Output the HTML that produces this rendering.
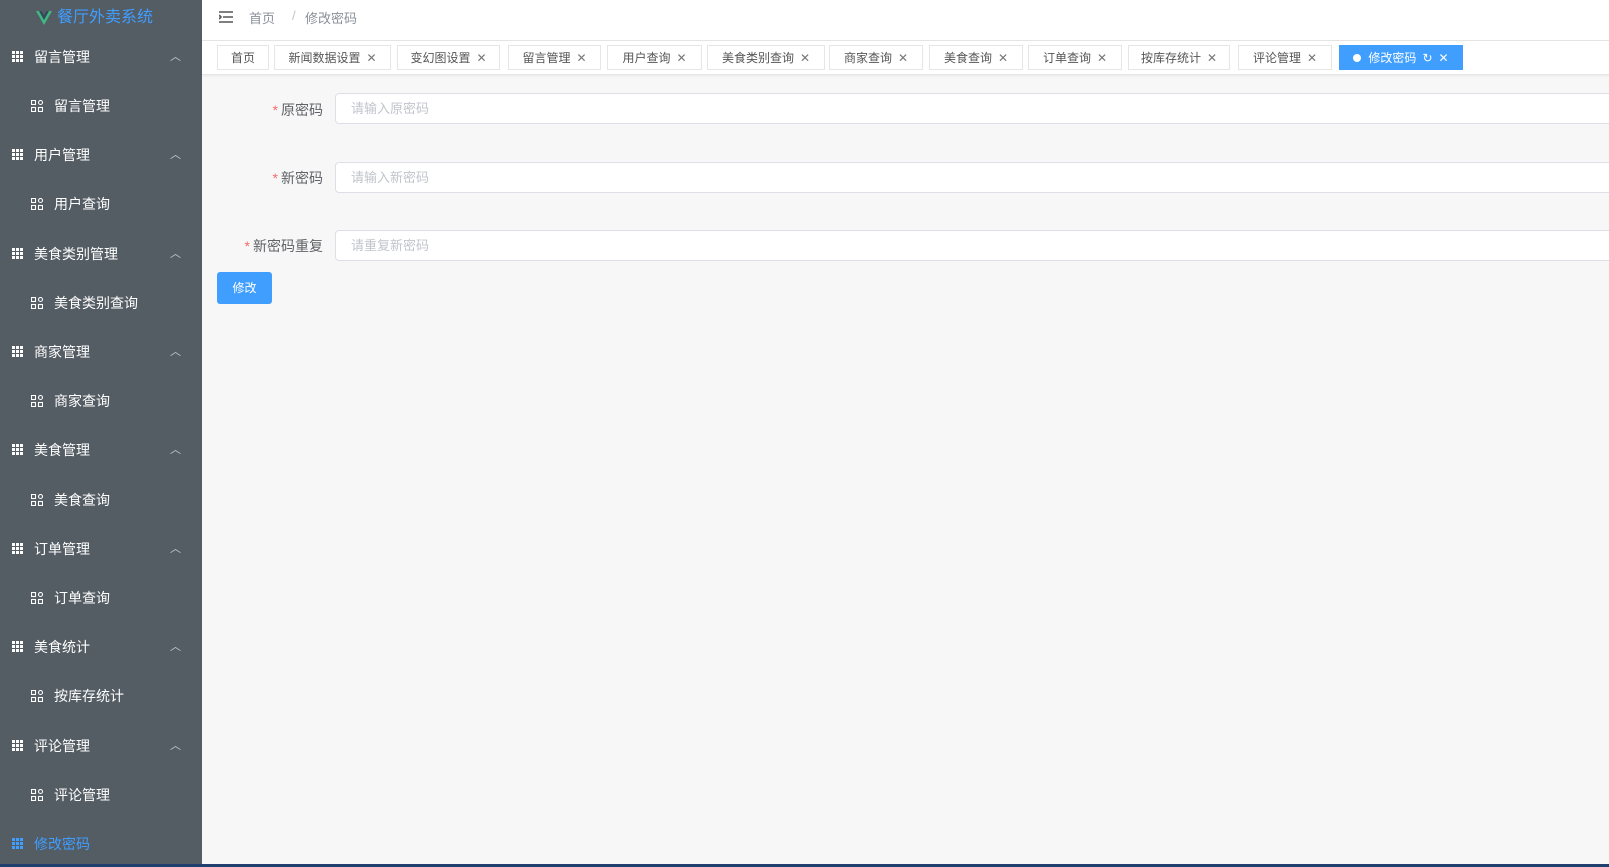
<!DOCTYPE html>
<html><head><meta charset="utf-8"><style>
*{margin:0;padding:0;box-sizing:border-box}
body{width:1609px;height:867px;overflow:hidden;background:#f7f7f7;font-family:"Liberation Sans","Noto Sans CJK SC",sans-serif;position:relative}
.side{position:absolute;left:0;top:0;width:202px;height:867px;background:#545c64}
.bot{position:absolute;left:0;top:864px;width:1609px;height:3px;background:#1f3f6e}
.logo{position:absolute;left:36px;top:7px;font-size:16px;color:#409eff;line-height:22px}
.logo svg{vertical-align:-3px;margin-right:5px}
.mi{position:absolute;left:0;width:202px;height:20px;line-height:20px;font-size:14px;color:#fff}
.mi .t{position:absolute;left:34px}
.mi.sub .t{left:54px}
.gi{position:absolute;left:12px;top:4px;width:11px;height:11px}
.si{position:absolute;left:31px;top:4px;width:12px;height:12px}
.ar{position:absolute;left:170px;top:0px;font-size:11px;color:#ccc}
.hdr{position:absolute;left:202px;top:0;right:0;height:41px;background:#fff;border-bottom:1px solid #e6e6e6}
.bc{position:absolute;top:8px;font-size:13px;color:#8a8f99}
.tabs{position:absolute;left:202px;top:41px;right:0;height:34px;background:#fff;border-bottom:1px solid #e6e6e6;box-shadow:0 1px 3px rgba(0,0,0,.06)}
.tab{position:absolute;top:4px;height:25px;border:1px solid #e6e6e6;background:#fff;font-size:12px;color:#555;line-height:24px;text-align:center}
.tab .x{color:#777;margin-left:6px;font-size:12px}
.tab.on{background:#409eff;border-color:#409eff;color:#fff}
.tab.on .x{color:#fff}
.lab{position:absolute;width:120px;left:203px;text-align:right;font-size:14px;color:#606266;line-height:20px}
.lab b{color:#f56c6c;font-weight:normal;margin-right:3px}
.inp{position:absolute;left:335px;right:-5px;height:31px;background:#fff;border:1px solid #dcdfe6;border-radius:4px;font-size:13px;color:#c0c4cc;line-height:29px;padding-left:15px}
.btn{position:absolute;left:217px;top:272px;width:55px;height:32px;background:#409eff;border-radius:3px;color:#fff;font-size:12px;line-height:32px;text-align:center}
</style></head><body>
<div class="side">
<div class="logo"><svg width="16" height="14" viewBox="0 0 16 14"><path d="M0 0h3l5 9 5-9h3L8 14z" fill="#41b883"/><path d="M3 0h2.5L8 4.5 10.5 0H13L8 9z" fill="#35495e"/></svg>餐厅外卖系统</div>
</div>
<div class="hdr">
<svg style="position:absolute;left:17px;top:11px" width="14" height="12" viewBox="0 0 14 12"><path d="M0 1h14M4 6h10M0 11h14M0 4l2 2-2 2" stroke="#555" stroke-width="1.6" fill="none"/></svg>
<span class="bc" style="left:47px">首页</span><span class="bc" style="left:90px;color:#c0c4cc">/</span><span class="bc" style="left:103px">修改密码</span>
</div>
<div class="tabs"></div>
<div id="m"></div>
<div class="lab" style="top:100px"><b>*</b>原密码</div>
<div class="inp" style="top:93px">请输入原密码</div>
<div class="lab" style="top:168px"><b>*</b>新密码</div>
<div class="inp" style="top:162px">请输入新密码</div>
<div class="lab" style="top:236px"><b>*</b>新密码重复</div>
<div class="inp" style="top:230px">请重复新密码</div>
<div class="btn">修改</div>
<div class="bot"></div>

<div class="tab" style="left:217px;width:52px;top:45px">首页</div>
<div class="tab" style="left:274px;width:117px;top:45px">新闻数据设置<span class="x">✕</span></div>
<div class="tab" style="left:397px;width:103px;top:45px">变幻图设置<span class="x">✕</span></div>
<div class="tab" style="left:508px;width:93px;top:45px">留言管理<span class="x">✕</span></div>
<div class="tab" style="left:607px;width:95px;top:45px">用户查询<span class="x">✕</span></div>
<div class="tab" style="left:707px;width:118px;top:45px">美食类别查询<span class="x">✕</span></div>
<div class="tab" style="left:829px;width:94px;top:45px">商家查询<span class="x">✕</span></div>
<div class="tab" style="left:929px;width:94px;top:45px">美食查询<span class="x">✕</span></div>
<div class="tab" style="left:1028px;width:94px;top:45px">订单查询<span class="x">✕</span></div>
<div class="tab" style="left:1128px;width:102px;top:45px">按库存统计<span class="x">✕</span></div>
<div class="tab" style="left:1238px;width:94px;top:45px">评论管理<span class="x">✕</span></div>
<div class="tab on" style="left:1339px;width:124px;top:45px"><span style="display:inline-block;width:8px;height:8px;border-radius:50%;background:#fff;margin-right:7px"></span>修改密码<span class="x" style="margin-left:6px">↻</span><span class="x">✕</span></div>

<script>
var g=[["留言管理","留言管理"],["用户管理","用户查询"],["美食类别管理","美食类别查询"],["商家管理","商家查询"],["美食管理","美食查询"],["订单管理","订单查询"],["美食统计","按库存统计"],["评论管理","评论管理"]];
var h="",gi='<svg class="gi" viewBox="0 0 11 11" fill="#fff"><rect x="0" y="0" width="3" height="3"/><rect x="4" y="0" width="3" height="3"/><rect x="8" y="0" width="3" height="3"/><rect x="0" y="4" width="3" height="3"/><rect x="4" y="4" width="3" height="3"/><rect x="8" y="4" width="3" height="3"/><rect x="0" y="8" width="3" height="3"/><rect x="4" y="8" width="3" height="3"/><rect x="8" y="8" width="3" height="3"/></svg>';
var si='<svg class="si" viewBox="0 0 12 12" fill="none" stroke="#fff" stroke-width="1.1"><rect x="0.5" y="0.5" width="4" height="4"/><rect x="7.5" y="0.5" width="4" height="4" rx="2"/><rect x="0.5" y="7.5" width="4" height="4"/><rect x="7.5" y="7.5" width="4" height="4"/></svg>';
for(var i=0;i<8;i++){var y=56.8+i*2*49.2-10;
h+='<div class="mi" style="top:'+y+'px">'+gi+'<span class="t">'+g[i][0]+'</span><span class="ar">︿</span></div>';
h+='<div class="mi sub" style="top:'+(y+49.2)+'px">'+si+'<span class="t">'+g[i][1]+'</span></div>';}
h+='<div class="mi" style="top:'+(56.8+16*49.2-10)+'px;color:#409eff">'+gi.replace('#fff','#409eff')+'<span class="t">修改密码</span></div>';
document.getElementById("m").innerHTML=h;
</script>
</body></html>
